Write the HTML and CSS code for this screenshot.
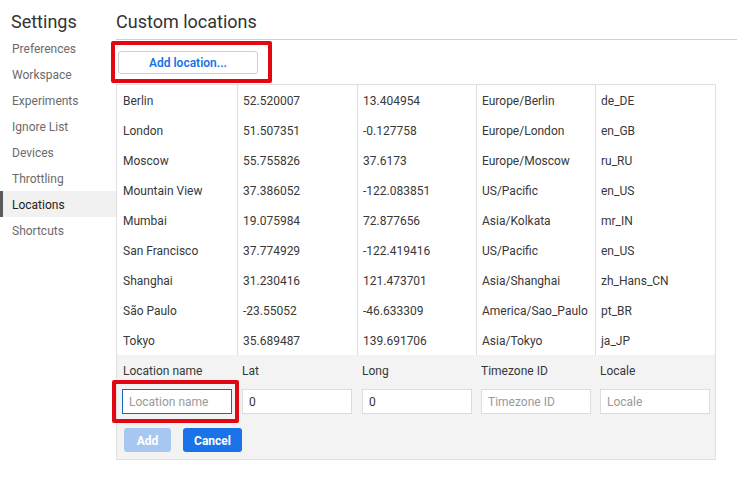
FILE: index.html
```html
<!DOCTYPE html>
<html lang="en">
<head>
    <meta charset="UTF-8">
    <meta name="viewport" content="width=device-width, initial-scale=1.0">
    <title>Settings - Locations</title>
    <link rel="stylesheet" href="styles.css">
</head>
<body>
    <div class="settings">
        <nav class="sidebar">
            <h1 class="sidebar-title">Settings</h1>
            <ul class="tabs">
                <li>Preferences</li>
                <li>Workspace</li>
                <li>Experiments</li>
                <li>Ignore List</li>
                <li>Devices</li>
                <li>Throttling</li>
                <li class="active">Locations</li>
                <li>Shortcuts</li>
            </ul>
        </nav>

        <main class="content">
            <h2 class="content-title">Custom locations</h2>

            <div class="toolbar">
                <button class="add-btn">Add location...</button>
                <div class="mark mark-add"></div>
            </div>

            <div class="locations">
                <div class="row"><span>Berlin</span><span>52.520007</span><span>13.404954</span><span>Europe/Berlin</span><span>de_DE</span></div>
                <div class="row"><span>London</span><span>51.507351</span><span>-0.127758</span><span>Europe/London</span><span>en_GB</span></div>
                <div class="row"><span>Moscow</span><span>55.755826</span><span>37.6173</span><span>Europe/Moscow</span><span>ru_RU</span></div>
                <div class="row"><span>Mountain View</span><span>37.386052</span><span>-122.083851</span><span>US/Pacific</span><span>en_US</span></div>
                <div class="row"><span>Mumbai</span><span>19.075984</span><span>72.877656</span><span>Asia/Kolkata</span><span>mr_IN</span></div>
                <div class="row"><span>San Francisco</span><span>37.774929</span><span>-122.419416</span><span>US/Pacific</span><span>en_US</span></div>
                <div class="row"><span>Shanghai</span><span>31.230416</span><span>121.473701</span><span>Asia/Shanghai</span><span>zh_Hans_CN</span></div>
                <div class="row"><span>São Paulo</span><span>-23.55052</span><span>-46.633309</span><span>America/Sao_Paulo</span><span>pt_BR</span></div>
                <div class="row"><span>Tokyo</span><span>35.689487</span><span>139.691706</span><span>Asia/Tokyo</span><span>ja_JP</span></div>

                <div class="editor">
                    <div class="editor-grid">
                        <label>Location name</label>
                        <label>Lat</label>
                        <label>Long</label>
                        <label>Timezone ID</label>
                        <label>Locale</label>
                        <div class="field"><input class="focused" type="text" placeholder="Location name"></div>
                        <div class="field"><input type="text" value="0"></div>
                        <div class="field"><input type="text" value="0"></div>
                        <div class="field"><input type="text" placeholder="Timezone ID"></div>
                        <div class="field"><input type="text" placeholder="Locale"></div>
                    </div>
                    <div class="editor-buttons">
                        <button class="btn btn-disabled">Add</button>
                        <button class="btn btn-primary">Cancel</button>
                    </div>
                    <div class="mark mark-name"></div>
                </div>
            </div>
        </main>
    </div>
</body>
</html>
```

FILE: styles.css
```css
* {
    box-sizing: border-box;
}

body {
    margin: 0;
    background: #fff;
    color: #222;
    font-family: "Segoe UI", Roboto, sans-serif;
    font-size: 12px;
}

.settings {
    display: flex;
    height: 477px;
    overflow: hidden;
}

/* Sidebar */
.sidebar {
    width: 116px;
    flex-shrink: 0;
}

.sidebar-title {
    margin: 0;
    height: 35px;
    padding: 10px 0 0 11px;
    font-size: 18px;
    font-weight: normal;
    color: #333;
    line-height: 24px;
}

.tabs {
    list-style: none;
    margin: 0;
    padding: 0;
}

.tabs li {
    height: 26px;
    line-height: 26px;
    padding: 1px 0 0 9px;
    color: #6b6b6b;
    border-left: 3px solid transparent;
}

.tabs li.active {
    background: #f1f1f1;
    border-left-color: #5a5a5a;
    color: #222;
}

/* Main */
.content {
    flex: 1;
}

.content-title {
    margin: 0;
    height: 40px;
    padding-top: 10px;
    font-size: 18px;
    font-weight: normal;
    line-height: 24px;
    color: #333;
    border-bottom: 1px solid #cfcfcf;
}

.toolbar {
    position: relative;
    height: 44px;
    padding: 11px 0 0 2px;
}

.add-btn {
    width: 140px;
    height: 23px;
    border: 1px solid #cfcfcf;
    border-radius: 3px;
    background: #fff;
    color: #1a73e8;
    font-family: inherit;
    font-size: 12px;
    font-weight: 600;
    padding: 1px 0 0;
}

/* red annotation boxes */
.mark {
    position: absolute;
    border: 4px solid #e30613;
    border-radius: 2px;
    pointer-events: none;
}

.mark-add {
    left: -5px;
    top: 1px;
    width: 161px;
    height: 42px;
}

.mark-name {
    left: -5px;
    top: 25px;
    width: 127px;
    height: 43px;
}

/* Locations table */
.locations {
    width: 600px;
    border-top: 1px solid #e0e0e0;
    border-left: 1px solid #e0e0e0;
    border-right: 1px solid #e0e0e0;
}

.row {
    display: grid;
    grid-template-columns: 120px 120px 119px 119px 1fr;
    height: 30px;
}

.row span {
    line-height: 30px;
    padding: 1px 0 0 6px;
    color: #383838;
    white-space: nowrap;
}

.row span + span {
    border-left: 1px solid #ddd;
    padding-left: 5px;
}

.editor {
    position: relative;
    background: #f3f3f3;
    border-bottom: 1px solid #e0e0e0;
    padding-bottom: 7px;
}

.editor-grid {
    display: grid;
    grid-template-columns: 120px 120px 119px 119px 1fr;
    grid-template-rows: 30px 29px;
}

.editor-grid label {
    line-height: 30px;
    padding: 1px 0 0 6px;
    color: #383838;
}

.editor-grid label + label {
    padding-left: 5px;
}

.field {
    padding: 4px 0 0 5px;
}

.field input {
    width: 110px;
    height: 25px;
    border: 1px solid #dcdcdc;
    background: #fff;
    padding: 1px 6px 0;
    font-family: inherit;
    font-size: 12px;
    color: #333;
    outline: none;
}

.field input::placeholder {
    color: #9a9a9a;
}

.field input.focused {
    border-color: #1a6ab8;
}

.editor-buttons {
    display: flex;
    gap: 12px;
    padding: 14px 0 0 7px;
}

.btn {
    height: 24px;
    border: none;
    border-radius: 3px;
    color: #fff;
    font-family: inherit;
    font-size: 12px;
    font-weight: bold;
    padding: 1px 0 0;
}

.btn-disabled {
    width: 47px;
    background: #a8c7f0;
}

.btn-primary {
    width: 59px;
    background: #1a73e8;
}
```
